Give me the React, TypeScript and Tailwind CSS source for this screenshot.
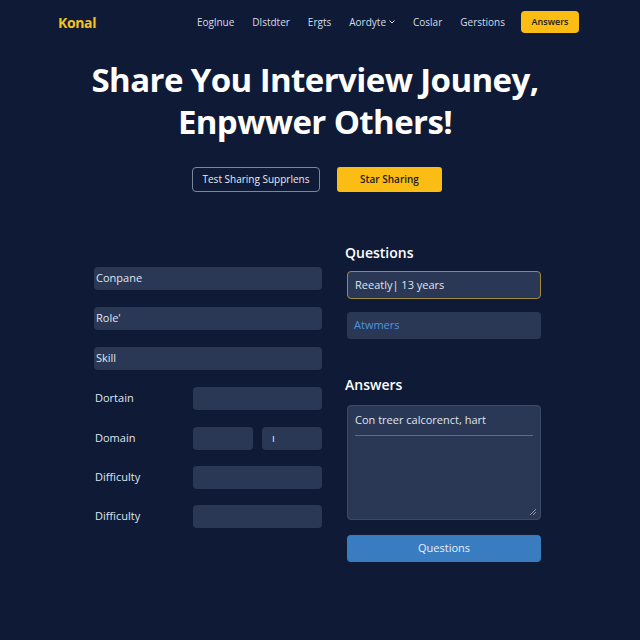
import React from "react";

const font = { fontFamily: '"Open Sans", "Noto Sans", sans-serif' };

function Input({ text, className = "" }: { text?: string; className?: string }) {
  return (
    <div className={`h-[23px] rounded-[4px] bg-[#2b3855] flex items-center px-[2px] text-[11px] text-[#dfe5f0] ${className}`}>
      {text}
    </div>
  );
}

function Row({ label, children }: { label: string; children: React.ReactNode }) {
  return (
    <div className="flex items-center h-[23px]">
      <div className="w-[99px] pl-[1px] text-[11px] text-[#dfe5f0]">{label}</div>
      <div className="flex-1 flex gap-[9px]">{children}</div>
    </div>
  );
}

export default function App() {
  return (
    <div className="w-[640px] h-[640px] overflow-hidden bg-[#0f1b36] text-white" style={font}>
      {/* Nav */}
      <div className="h-[44px] flex items-center pl-[58px] pr-[61px]">
        <div className="text-[14px] font-bold text-[#f7c21d] tracking-tight">Konal</div>
        <div className="ml-auto flex items-center gap-[18px] text-[10px] text-[#d6dbe6]">
          <span>Eoglnue</span>
          <span>Dlstdter</span>
          <span>Ergts</span>
          <span className="flex items-center gap-[3px]">
            Aordyte
            <svg width="6" height="4" viewBox="0 0 6 4"><path d="M0.5 0.5 L3 3 L5.5 0.5" stroke="#d6dbe6" strokeWidth="1" fill="none" /></svg>
          </span>
          <span>Coslar</span>
          <span>Gerstions</span>
          <div className="ml-[-2px] h-[22px] w-[58px] rounded-[4px] bg-[#fbbd14] text-[#1a1a1a] text-[9px] font-semibold flex items-center justify-center">
            Answers
          </div>
        </div>
      </div>

      {/* Hero */}
      <h1 className="mt-[15px] pr-[10px] text-center text-[33px] font-bold leading-[42px] text-white tracking-[-0.6px]">
        Share You Interview Jouney,
        <br />
        Enpwwer Others!
      </h1>

      <div className="mt-[24px] flex justify-center gap-[17px] pr-[6px]">
        <div className="h-[25px] w-[128px] rounded-[4px] border border-[#7a879e] text-[10px] text-[#e6eaf2] flex items-center justify-center">
          Test Sharing Supprlens
        </div>
        <div className="h-[25px] w-[105px] rounded-[3px] bg-[#fbbd14] text-[10px] font-semibold text-[#1a1a1a] flex items-center justify-center">
          Star Sharing
        </div>
      </div>

      {/* Form */}
      <div className="mt-[51px] flex pl-[94px] gap-[23px]">
        <div className="w-[228px] mt-[24px] flex flex-col gap-[17px]">
          <Input text="Conpane" />
          <Input text="Role'" />
          <Input text="Skill" />
          <Row label="Dortain"><Input className="flex-1" /></Row>
          <Row label="Domain">
            <Input className="w-[60px]" />
            <Input className="flex-1 pl-[10px]" text="ı" />
          </Row>
          <div className="-mt-[1px]"><Row label="Difficulty"><Input className="flex-1" /></Row></div>
          <div className="-mt-[1px]"><Row label="Difficulty"><Input className="flex-1" /></Row></div>
        </div>

        <div className="w-[196px] flex flex-col">
          <div className="text-[14px] font-semibold leading-[20px] text-white">Questions</div>
          <div className="mt-[8px] ml-[2px] h-[28px] rounded-[4px] bg-[#2b3855] border border-[#a08a3c] flex items-center px-[7px] text-[11px] text-[#dfe5f0]">
            Reeatly| 13 years
          </div>
          <div className="mt-[13px] ml-[2px] h-[27px] rounded-[4px] bg-[#2b3855] flex items-center px-[7px] text-[11px] text-[#4d94df]">
            Atwmers
          </div>
          <div className="mt-[36px] text-[14px] font-semibold leading-[20px] text-white">Answers</div>
          <div className="mt-[10px] ml-[2px] h-[115px] rounded-[4px] bg-[#2b3855] border border-[#3c4a68] relative px-[7px] pt-[6px]">
            <div className="text-[11px] text-[#dfe5f0] pb-[6px] border-b border-[#5d6b86]">Con treer calcorenct, hart</div>
            <svg className="absolute right-[3px] bottom-[3px]" width="8" height="8" viewBox="0 0 8 8">
              <path d="M7 1 L1 7 M7 4 L4 7" stroke="#8c97ad" strokeWidth="1" />
            </svg>
          </div>
          <div className="mt-[15px] ml-[2px] h-[27px] rounded-[4px] bg-[#3a7cc0] flex items-center justify-center text-[11px] text-[#e8f0fa]">
            Questions
          </div>
        </div>
      </div>
    </div>
  );
}
